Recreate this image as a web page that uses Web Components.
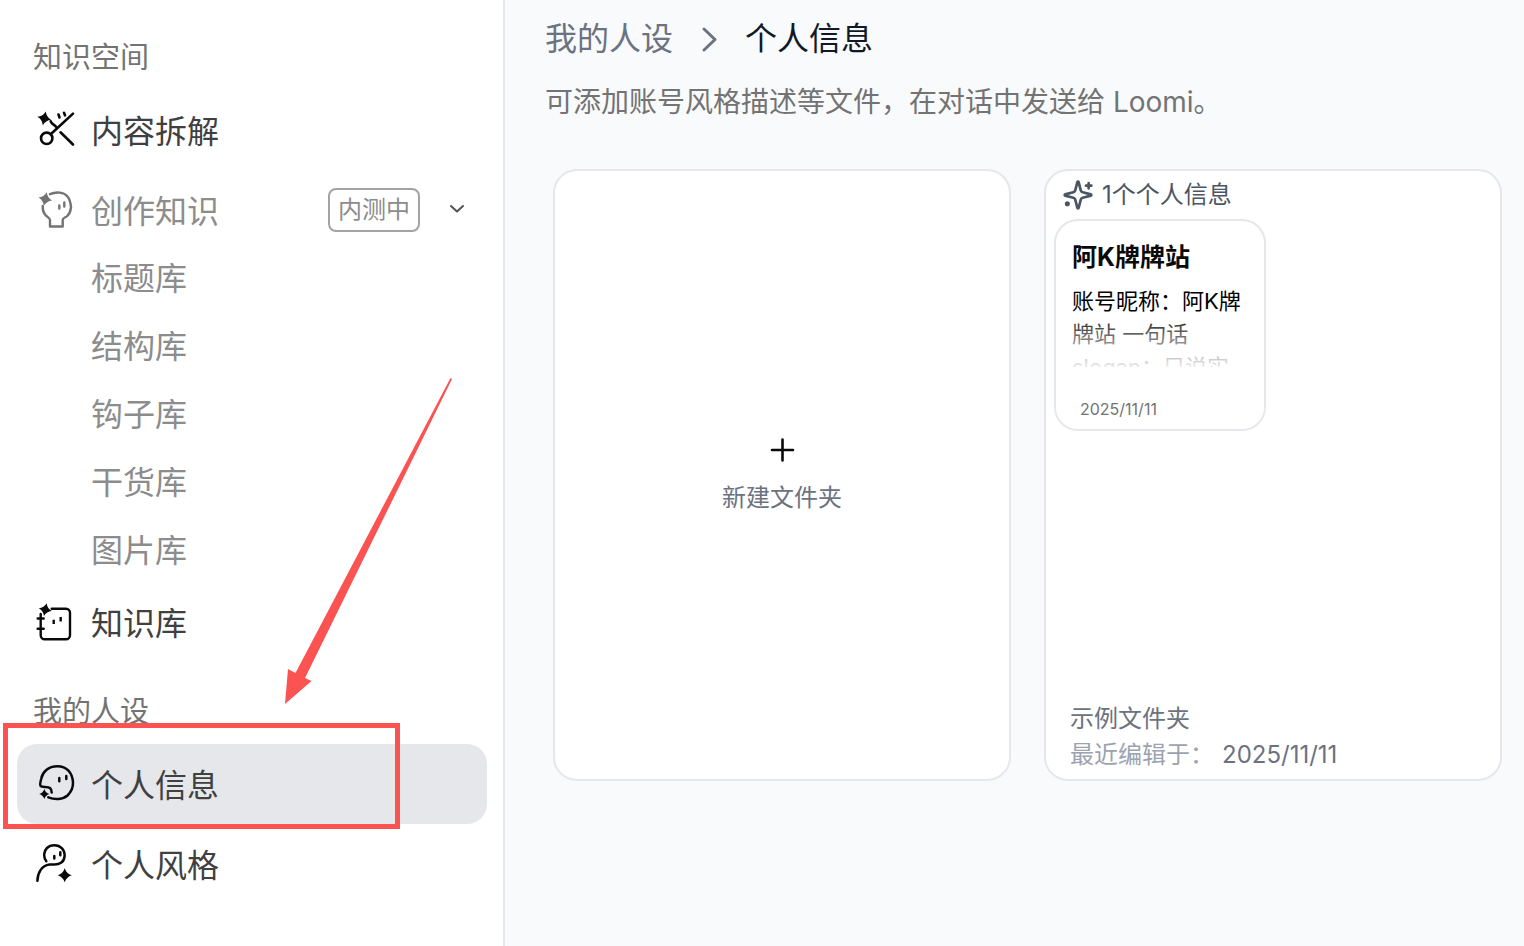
<!DOCTYPE html>
<html lang="zh-CN">
<head>
<meta charset="utf-8">
<title>个人信息</title>
<style>
  body { margin: 0; font-family: Inter, "Noto Sans CJK SC", sans-serif; background: #f9fafc; }
</style>
</head>
<body>
<knowledge-app></knowledge-app>

<script>
const define = (name, html) => {
  const template = document.createElement('template');
  template.innerHTML = html;
  customElements.define(name, class extends HTMLElement {
    constructor() {
      super();
      this.attachShadow({ mode: 'open' }).append(template.content.cloneNode(true));
    }
  });
};

const star = (x, y, r) => {
  const k = r / 4;
  return `<path fill="currentColor" stroke="none" d="M${x} ${y - r}Q${x + k} ${y - k} ${x + r} ${y}Q${x + k} ${y + k} ${x} ${y + r}Q${x - k} ${y + k} ${x - r} ${y}Q${x - k} ${y - k} ${x} ${y - r}Z"/>`;
};

const icons = {
  scissors: [40, 2.6, `<g transform="rotate(12 8.3 8.3)">${star(8.3, 8.3, 7)}</g><circle cx="10.7" cy="28.3" r="5.7"/><path d="M14.7 24.200 37 3.600M14.700 11.300c1 3 3.500 3 5.300 5.400M24.500 22.300 37 34.500M22.500 4.500l1 3M28 2.800l1 2.600"/>`],
  head: [40, 2.4, `<g transform="rotate(12 9.3 9)">${star(9.3, 9, 7)}</g><path d="M14 4.200C20 1.500 28 2 31.500 6.500c3 3.500 3.200 7 3.500 11-.5 4-1.700 6.500-3.700 8.500-1.500 1.500-4.600 1.500-4.600 4v6.500H14V30c0-2-3.200-3.200-5-5.500-2-2.500-2.500-5-2.300-8.500M23.300 15.500v3M28.300 12.500v4"/>`],
  notebook: [40, 2.4, `<g transform="rotate(12 9.3 7.6)">${star(9.3, 7.6, 6.6)}</g><path d="M15.700 6.700H30a4 4 0 0 1 4 4v22.600a4 4 0 0 1-4 4H8.700a4 4 0 0 1-4-4V12M1.700 16.500h6M1.700 26.700h6"/><path stroke-linecap="butt" d="M17.700 17.700v4.400M24.700 15v4.400"/>`],
  face: [40, 2.5, `${star(8.3, 30, 5)}<path d="M12.300 33.300C19 36 27 35.500 31.500 31.500c4-4 5.700-8 5.500-13C36.500 8.500 30.500 2.300 21.500 2.300 12 2.300 6.500 8 5.300 14.500 4.500 18 3.500 20 4.500 21.800c1.500 2 7.500.2 9.500 2.200 1.300 1.200 1.700 2.800 1.700 4.500M23.300 14v3.200M30.300 12v3"/>`],
  person: [40, 2.5, `${star(28.7, 31.3, 7)}<path d="M10.300 17.200C7 13 7.800 7 11 4c4-3.700 11-3.700 14.800.2 4 4.200 3.800 11.500-.8 14.600-4 3-7.500 1.200-11.500 1.700C5.500 21.500 1.600 29 1.400 36.800M18.300 12v2.600M24.300 8.200v3"/>`],
  sparkles: [24, 2, `<path d="M9.937 15.5A2 2 0 0 0 8.5 14.063l-6.135-1.582a.5.5 0 0 1 0-.962L8.5 9.936A2 2 0 0 0 9.937 8.5l1.582-6.135a.5.5 0 0 1 .963 0L14.063 8.5A2 2 0 0 0 15.5 9.937l6.135 1.581a.5.5 0 0 1 0 .964L15.5 14.063a2 2 0 0 0-1.437 1.437l-1.582 6.135a.5.5 0 0 1-.963 0zM20 3v4M22 5h-4"/><circle cx="4" cy="18.500" r="1.900" fill="currentColor" stroke="none"/>`],
  down: [20, 2, `<path d="m4 6 6 5.500L16 6"/>`],
  right: [32, 3, `<path d="m11 6 11 10.500L11 27"/>`],
  plus: [32, 2.6, `<path d="M16.500 5.500v21M6 16h21"/>`]
};

customElements.define('ui-icon', class extends HTMLElement {
  connectedCallback() {
    if (this.shadowRoot) return;
    const [box, width, art] = icons[this.getAttribute('name')];
    this.attachShadow({ mode: 'open' }).innerHTML = `
      <style>
        :host { display: block; flex: none; width: var(--icon-size, 40px); height: var(--icon-size, 40px); }
        svg { display: block; width: 100%; height: 100%; }
      </style>
      <svg viewBox="0 0 ${box} ${box}" fill="none" stroke="currentColor" stroke-width="${width}" stroke-linecap="round" stroke-linejoin="round" aria-hidden="true">${art}</svg>`;
  }
});

define('nav-title', `
  <style>
    :host { display: block; }
    h2 { margin: 0; padding: 30px 0 12px 33px; font-size: 29px; line-height: 40px; font-weight: 400; color: #737373; }
  </style>
  <h2><slot></slot></h2>`);

define('nav-item', `
  <style>
    :host { display: block; margin: 0 16px 0 17px; color: #0a0a0a; --label: #404040; }
    :host([muted]) { color: #737373; --label: #8c8c8c; }
    a { display: flex; align-items: center; height: 80px; padding: 0 20px 0 19px; border-radius: 20px; color: inherit; text-decoration: none; }
    :host([selected]) a { background: #e5e7eb; }
    .label { flex: 1; margin-left: 15px; padding-top: 3px; font-size: 32px; line-height: 48px; color: var(--label); }
  </style>
  <a href="#"><slot name="icon"></slot><span class="label"><slot></slot></span><slot name="end"></slot></a>`);

define('nav-sublist', `
  <style>
    :host { display: grid; gap: 8px; margin: -1px 0 1px; padding-left: 91px; }
  </style>
  <slot></slot>`);

define('nav-subitem', `
  <style>
    :host { display: block; }
    a { display: block; font-size: 32px; line-height: 60px; color: #8c8c8c; text-decoration: none; }
  </style>
  <a href="#"><slot></slot></a>`);

define('beta-badge', `
  <style>
    :host { display: block; box-sizing: border-box; padding: 0 8px; margin-right: 27px; border: 2px solid #a3a3a3; border-radius: 8px; font-size: 24px; line-height: 40px; color: #8c8c8c; }
  </style>
  <slot></slot>`);

define('app-sidebar', `
  <style>
    :host { display: block; box-sizing: border-box; width: 505px; padding-top: 8px; border-right: 2px solid #e5e7eb; background: #fff; }
    .chevron { --icon-size: 20px; color: #525252; }
  </style>
  <nav>
    <nav-title>知识空间</nav-title>
    <nav-item><ui-icon slot="icon" name="scissors"></ui-icon>内容拆解</nav-item>
    <nav-item muted><ui-icon slot="icon" name="head"></ui-icon>创作知识<beta-badge slot="end">内测中</beta-badge><ui-icon class="chevron" slot="end" name="down"></ui-icon></nav-item>
    <nav-sublist>
      <nav-subitem>标题库</nav-subitem>
      <nav-subitem>结构库</nav-subitem>
      <nav-subitem>钩子库</nav-subitem>
      <nav-subitem>干货库</nav-subitem>
      <nav-subitem>图片库</nav-subitem>
    </nav-sublist>
    <nav-item><ui-icon slot="icon" name="notebook"></ui-icon>知识库</nav-item>
    <nav-title>我的人设</nav-title>
    <nav-item selected><ui-icon slot="icon" name="face"></ui-icon>个人信息</nav-item>
    <nav-item><ui-icon slot="icon" name="person"></ui-icon>个人风格</nav-item>
  </nav>`);

define('page-header', `
  <style>
    :host { display: block; }
    .crumbs { display: flex; align-items: center; gap: 20px; font-size: 32px; line-height: 44px; color: #6b7280; }
    a { color: inherit; text-decoration: none; }
    h1 { margin: 0; font: inherit; color: #111827; }
    ui-icon { --icon-size: 32px; }
    p { margin: 20px 0 0; font-size: 28px; line-height: 42px; color: #737373; }
  </style>
  <div class="crumbs"><a href="#">我的人设</a><ui-icon name="right"></ui-icon><h1>个人信息</h1></div>
  <p><slot></slot></p>`);

define('new-folder-card', `
  <style>
    :host { display: block; aspect-ratio: 229 / 306; }
    button { display: flex; flex-direction: column; align-items: center; justify-content: center; gap: 14px; box-sizing: border-box; width: 100%; height: 100%; padding: 0; border: 2px solid #e5e7eb; border-radius: 24px; background: #fff; font: inherit; font-size: 24px; line-height: 36px; color: #6b7280; }
    ui-icon { --icon-size: 32px; color: #0a0a0a; }
  </style>
  <button type="button"><ui-icon name="plus"></ui-icon><slot></slot></button>`);

define('note-card', `
  <style>
    :host { display: block; position: relative; box-sizing: border-box; width: 212px; height: 212px; padding: 18px 16px; border: 2px solid #e5e7eb; border-radius: 24px; background: #fff; overflow: hidden; }
    h3 { margin: 0 0 10px; font-size: 25px; line-height: 36px; font-weight: 700; color: #0a0a0a; }
    .text { height: 82px; overflow: hidden; font-size: 22px; line-height: 33px; color: #000; }
    .fade { position: absolute; inset: 90px 0 0; background: linear-gradient(rgba(255,255,255,0), rgba(255,255,255,.6) 34px, rgba(255,255,255,.92) 56px, #fff 58px); }
    time { position: absolute; left: 24px; bottom: 8px; font-size: 16px; line-height: 24px; color: #737373; }
  </style>
  <h3><slot name="title"></slot></h3>
  <div class="text"><slot></slot></div>
  <div class="fade"></div>
  <time><slot name="date"></slot></time>`);

define('folder-card', `
  <style>
    :host { display: flex; flex-direction: column; box-sizing: border-box; aspect-ratio: 229 / 306; padding: 0 8px 6px; border: 2px solid #e5e7eb; border-radius: 24px; background: #fff; }
    header { display: flex; align-items: center; gap: 8px; padding-left: 8px; font-size: 24px; line-height: 48px; color: #4b5563; }
    ui-icon { --icon-size: 32px; }
    footer { margin-top: auto; padding-left: 16px; font-size: 24px; line-height: 36px; color: #6b7280; }
    .edited { display: flex; gap: 8px; }
    .edited span { color: #9ca3af; }
  </style>
  <header><ui-icon name="sparkles"></ui-icon><slot name="count"></slot></header>
  <slot></slot>
  <footer>
    <slot name="name"></slot>
    <div class="edited"><span>最近编辑于：</span><slot name="date"></slot></div>
  </footer>`);

define('guide-marks', `
  <style>
    :host { position: absolute; inset: 0 auto auto 0; pointer-events: none; }
    .frame { position: absolute; left: 3px; top: 723px; box-sizing: border-box; width: 397px; height: 106px; border: 5px solid #fb5252; }
    svg { position: absolute; left: 285px; top: 378px; width: 167px; height: 326px; }
  </style>
  <div class="frame"></div>
  <svg viewBox="0 0 167 326" aria-hidden="true"><path fill="#fb5252" d="M0 326 3 291l7.500 4L165.500 0l1.500 1L20 300l6.500 3z"/></svg>`);

define('knowledge-app', `
  <style>
    :host { display: grid; grid-template-columns: auto 1fr; position: relative; min-height: 100vh; }
    main { padding: 17px 22px 16px 40px; }
    .cards { display: grid; grid-template-columns: repeat(auto-fill, minmax(420px, 1fr)); gap: 33px; margin: 46px 0 0 8px; }
  </style>
  <app-sidebar></app-sidebar>
  <main>
    <page-header>可添加账号风格描述等文件，在对话中发送给 Loomi。</page-header>
    <section class="cards">
      <new-folder-card>新建文件夹</new-folder-card>
      <folder-card>
        <span slot="count">1个个人信息</span>
        <note-card>
          <span slot="title">阿K牌牌站</span>
          账号昵称：阿K牌牌站 一句话 slogan：只说实
          <span slot="date">2025/11/11</span>
        </note-card>
        <span slot="name">示例文件夹</span>
        <span slot="date">2025/11/11</span>
      </folder-card>
    </section>
  </main>
  <guide-marks></guide-marks>`);
</script>
</body>
</html>
